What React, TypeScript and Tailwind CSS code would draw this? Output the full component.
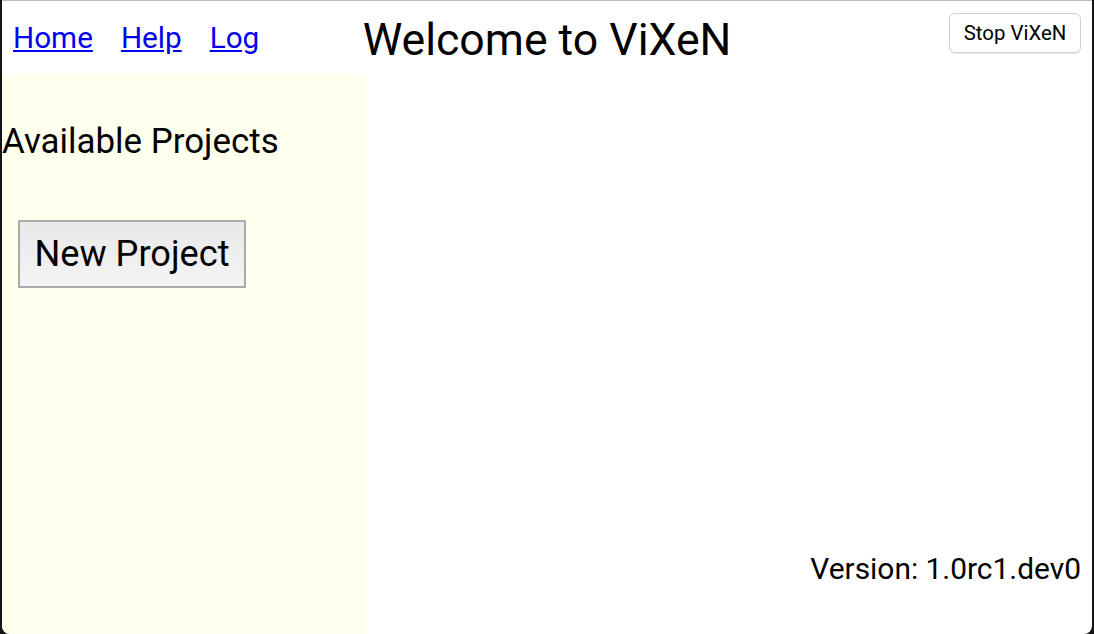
import React from 'react';

const font = { fontFamily: 'Roboto, "Liberation Sans", sans-serif' };

export default function App() {
  return (
    <div className="h-[634px] w-full bg-[#151515] px-[2px]" style={font}>
      <div className="flex h-full flex-col overflow-hidden rounded-b-[8px] border-t border-[#bcbcbc] bg-white text-black">
        {/* header */}
        <div className="grid h-[73px] shrink-0 grid-cols-[1fr_auto_1fr]">
          <nav className="flex gap-[28px] pl-[11px] pt-[22px] text-[29.7px] leading-none">
            <a href="#" className="text-[#0000ee] underline">Home</a>
            <a href="#" className="text-[#0000ee] underline">Help</a>
            <a href="#" className="text-[#0000ee] underline">Log</a>
          </nav>
          <h1 className="pt-[17px] text-[44.6px] leading-none font-normal">Welcome to ViXeN</h1>
          <div className="flex justify-end pr-[11px] pt-[12px]">
            <button className="flex h-[40px] w-[132px] items-center justify-center rounded-[6px] border border-[#cfcfcf] bg-white text-[20.4px] leading-none shadow-[0_1px_1px_rgba(0,0,0,0.08)]">
              Stop ViXeN
            </button>
          </div>
        </div>

        {/* body */}
        <div className="flex flex-1">
          <aside className="w-[364px] shrink-0 bg-[#ffffee]">
            <h2 className="mt-[51px] text-[34.9px] leading-none font-normal">Available Projects</h2>
            <button className="ml-[16px] mt-[60px] flex h-[68px] w-[228px] items-center justify-center border-2 border-[#aaaaaa] bg-gradient-to-b from-[#e8e8e8] to-[#f4f4f4] text-[36.2px] leading-none">
              New Project
            </button>
          </aside>
          <main className="flex flex-1 flex-col items-end justify-end pb-[50px] pr-[11px]">
            <p className="text-[29.9px] leading-none">Version: 1.0rc1.dev0</p>
          </main>
        </div>
      </div>
    </div>
  );
}
